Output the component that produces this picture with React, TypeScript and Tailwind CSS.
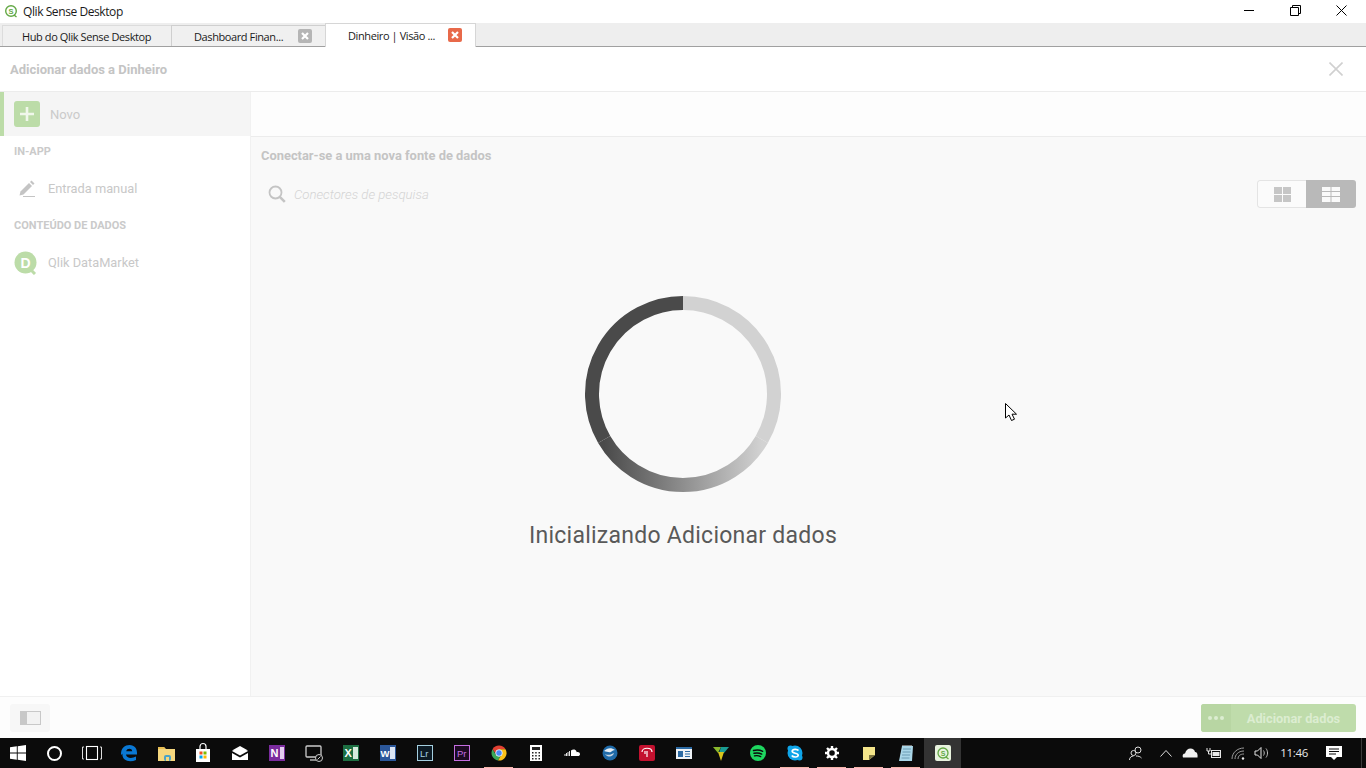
import type { ReactNode } from 'react';

const plex = "font-['Roboto',sans-serif]";

const Ico = ({ children, className = '' }: { children: ReactNode; className?: string }) => (
  <svg viewBox="0 0 24 24" width="24" height="24" className={className}>
    {children}
  </svg>
);

const TabClose = ({ color }: { color: string }) => (
  <span className={`w-[14px] h-[14px] rounded-[2px] flex items-center justify-center ${color}`}>
    <svg viewBox="0 0 10 10" width="10" height="10">
      <path d="M2 2 8 8M8 2 2 8" stroke="#fff" strokeWidth="2.2" />
    </svg>
  </span>
);

const taskIcons: { key: string; node: ReactNode; mark?: boolean }[] = [
  {
    key: 'cortana',
    node: <span className="block w-[15px] h-[15px] -ml-[1px] rounded-full border-[2px] border-white" />,
  },
  {
    key: 'taskview',
    node: (
      <Ico>
        <path d="M4 6H2.500v12H4M20 6h1.500v12H20" fill="none" stroke="#ddd" strokeWidth="1" />
        <rect x="6.500" y="5.500" width="11" height="13" fill="none" stroke="#fff" strokeWidth="1.100" />
      </Ico>
    ),
  },
  {
    key: 'edge',
    node: (
      <Ico>
        <path
          d="M4 13C4 7 8 4 12.500 4c5 0 8 3.500 7.500 9.500H9c.3 3.500 5.500 4.500 10 2v3.500c-6.500 3-14.500.5-13.500-6.500C4.800 14 4.300 14 4 13Zm5.200-2.800h6c0-3.300-5.500-3.300-6 0Z"
          fill="#0a78d4"
        />
      </Ico>
    ),
  },
  {
    key: 'explorer',
    node: (
      <Ico>
        <path d="M4 6h6l2 2h9v12H4Z" fill="#f5d77e" />
        <path d="M4 6h6l1 2H4Z" fill="#e8bd50" />
        <rect x="10" y="14" width="7" height="6" rx="2" fill="#4ba3c7" />
        <rect x="12" y="16" width="3" height="4" fill="#f5d77e" />
      </Ico>
    ),
  },
  {
    key: 'store',
    node: (
      <Ico>
        <path d="M5 8h14v13H5Z" fill="#fff" />
        <path d="M9 8V5.500a3 3 0 0 1 6 0V8" fill="none" stroke="#fff" strokeWidth="1.200" />
        <rect x="8.500" y="10.500" width="3" height="3" fill="#f25022" />
        <rect x="12.500" y="10.500" width="3" height="3" fill="#7fba00" />
        <rect x="8.500" y="14.500" width="3" height="3" fill="#00a4ef" />
        <rect x="12.500" y="14.500" width="3" height="3" fill="#ffb900" />
      </Ico>
    ),
  },
  {
    key: 'mail',
    node: (
      <Ico>
        <path d="M4 10h16l-8 4.500Z" fill="#fff" />
        <path d="M4 12v7h16v-7l-8 4.500Z" fill="#fff" />
        <path d="M4 9.500 12 5l8 4.500-8 2Z" fill="#fff" />
      </Ico>
    ),
  },
  {
    key: 'onenote',
    node: (
      <Ico>
        <rect x="4" y="4" width="16" height="16" fill="#7b2c9e" />
        <rect x="15" y="6" width="4" height="12" fill="#e4cdf0" />
        <text x="5.500" y="16" fill="#fff" fontSize="11" fontWeight="700" fontFamily="Liberation Sans, sans-serif">
          N
        </text>
      </Ico>
    ),
  },
  {
    key: 'remote',
    node: (
      <Ico>
        <rect x="4" y="5" width="15" height="11" rx="1" fill="none" stroke="#ccc" strokeWidth="1.300" />
        <path d="M8 19h6" stroke="#ccc" strokeWidth="1.300" />
        <circle cx="17" cy="17" r="3.500" fill="#0b0b0b" stroke="#ccc" strokeWidth="1" />
        <path d="m15.500 18.500 3-3" stroke="#ccc" />
      </Ico>
    ),
  },
  {
    key: 'excel',
    node: (
      <Ico>
        <rect x="4" y="4" width="16" height="16" fill="#1d6f42" />
        <rect x="14" y="6" width="5" height="12" fill="#d6ebdd" />
        <text x="5.500" y="16" fill="#fff" fontSize="11" fontWeight="700" fontFamily="Liberation Sans, sans-serif">
          X
        </text>
      </Ico>
    ),
  },
  {
    key: 'word',
    node: (
      <Ico>
        <rect x="4" y="4" width="16" height="16" fill="#2b579a" />
        <rect x="14" y="6" width="5" height="12" fill="#dbe5f4" />
        <text x="4.500" y="15.500" fill="#fff" fontSize="9.500" fontWeight="700" fontFamily="Liberation Sans, sans-serif">
          W
        </text>
      </Ico>
    ),
  },
  {
    key: 'lightroom',
    node: (
      <Ico>
        <rect x="4.500" y="4.500" width="15" height="15" fill="#0c1a24" stroke="#a4cfe0" />
        <text x="7" y="15.500" fill="#a4cfe0" fontSize="9.500" fontFamily="Liberation Sans, sans-serif">
          Lr
        </text>
      </Ico>
    ),
  },
  {
    key: 'premiere',
    node: (
      <Ico>
        <rect x="4.500" y="4.500" width="15" height="15" fill="#1c0a22" stroke="#c46de0" />
        <text x="7" y="15.500" fill="#c46de0" fontSize="9.500" fontFamily="Liberation Sans, sans-serif">
          Pr
        </text>
      </Ico>
    ),
  },
  {
    key: 'chrome',
    mark: true,
    node: (
      <Ico>
        <path d="M12 4.500a7.500 7.500 0 0 1 6.500 3.750H12Z" fill="#e34133" />
        <path d="M5.500 8.250A7.500 7.500 0 0 1 12 4.500v3.750l-3 5Z" fill="#e34133" />
        <path d="M5.500 8.250a7.500 7.500 0 0 0 5.500 11.200l3-5.500-5 0Z" fill="#3aa757" />
        <path d="M18.500 8.250a7.500 7.500 0 0 1-7.500 11.200l3.500-6L12 8.250Z" fill="#fbc118" />
        <circle cx="12" cy="12" r="3.300" fill="#4a8af4" stroke="#fff" strokeWidth=".8" />
      </Ico>
    ),
  },
  {
    key: 'calc',
    node: (
      <Ico>
        <rect x="6" y="4" width="12" height="16" fill="#fff" />
        <rect x="8" y="6" width="8" height="3" fill="#222" />
        <path
          d="M8 11h1.500v1.500H8Zm3.200 0h1.500v1.500h-1.500Zm3.300 0H16v1.500h-1.500ZM8 14h1.500v1.500H8Zm3.200 0h1.500v1.500h-1.500Zm3.300 0H16v1.500h-1.500ZM8 17h1.500v1.500H8Zm3.200 0h1.500v1.500h-1.500Zm3.300 0H16v1.500h-1.500Z"
          fill="#222"
        />
      </Ico>
    ),
  },
  {
    key: 'soundcloud',
    node: (
      <Ico>
        <path d="M10 15V9.500c1-1 2.500-1.300 3.500-1 1.200.4 2 1.500 2.200 2.700 1.800-.5 3.300.6 3.300 2 0 1.100-.9 1.800-2 1.800Z" fill="#fff" />
        <path d="M8.500 15v-5M7 15v-4M5.500 15v-3M4 15v-2" stroke="#fff" strokeWidth=".9" />
      </Ico>
    ),
  },
  {
    key: 'thunderbird',
    node: (
      <Ico>
        <circle cx="12" cy="12" r="7.500" fill="#1f6aa8" />
        <path d="M6 10c3-3 7-4 11-1-2 0-3 1-4 2-2 .5-4 0-7-1Z" fill="#e7eef5" />
        <path d="M7 13c3 1.500 5 1 9-1-1 4-6 5-9 1Z" fill="#c9d6e2" />
      </Ico>
    ),
  },
  {
    key: 'pin',
    node: (
      <Ico>
        <rect x="4" y="4" width="16" height="16" rx="2" fill="#c3112f" />
        <path d="M7 11c0-5 10-5 10 0M12 10v6M10 10v3" fill="none" stroke="#fff" strokeWidth="1.200" />
      </Ico>
    ),
  },
  {
    key: 'news',
    node: (
      <Ico>
        <rect x="4" y="6" width="16" height="12" fill="#eef2f6" />
        <rect x="4" y="6" width="16" height="2" fill="#2c6aa3" />
        <rect x="6" y="10" width="5" height="6" fill="#2c6aa3" />
        <path d="M13 10.500h5M13 13h5M13 15.500h5" stroke="#2c6aa3" />
      </Ico>
    ),
  },
  {
    key: 'vectornator',
    node: (
      <Ico>
        <path d="M4 6h8l-3 6Z" fill="#8ab92d" />
        <path d="M12 6h8l-5 6h-5Z" fill="#1a9d94" />
        <path d="M9 11h6l-3 9Z" fill="#d9c51e" />
      </Ico>
    ),
  },
  {
    key: 'spotify',
    node: (
      <Ico>
        <circle cx="12" cy="12" r="8" fill="#1ed760" />
        <path
          d="M7.500 9.500c3-.8 6.500-.6 9.200.8M8 12.300c2.500-.6 5.500-.4 7.700.8M8.500 14.900c2-.5 4.300-.3 6.200.7"
          fill="none"
          stroke="#0b0b0b"
          strokeWidth="1.400"
          strokeLinecap="round"
        />
      </Ico>
    ),
  },
  {
    key: 'skype',
    mark: true,
    node: (
      <Ico>
        <circle cx="12" cy="12" r="7.500" fill="#0fa5e9" />
        <circle cx="7.500" cy="7.500" r="3" fill="#0fa5e9" />
        <circle cx="16.500" cy="16.500" r="3" fill="#0fa5e9" />
        <path
          d="M15.500 9.500c-1-1.500-6-1.800-6.300.6-.3 2.600 6.200 1.600 6 4.200-.2 2.200-5 2.200-6.400.2"
          fill="none"
          stroke="#fff"
          strokeWidth="1.700"
        />
      </Ico>
    ),
  },
  {
    key: 'settings',
    mark: true,
    node: (
      <Ico>
        <circle cx="12" cy="12" r="4" fill="none" stroke="#fff" strokeWidth="2.400" />
        <path
          d="M12 5v3M12 16v3M5 12h3M16 12h3M7 7l2 2M15 15l2 2M17 7l-2 2M9 15l-2 2"
          stroke="#fff"
          strokeWidth="2.400"
        />
      </Ico>
    ),
  },
  {
    key: 'sticky',
    mark: true,
    node: (
      <Ico>
        <path d="M6 6h12v8l-6 5H6Z" fill="#f4e58a" />
        <path d="M18 14h-6v5Z" fill="#7c7440" />
      </Ico>
    ),
  },
  {
    key: 'notepad',
    mark: true,
    node: (
      <Ico>
        <path d="M8 5h11l-1 15H5Z" fill="#a9d6e8" />
        <path d="M9 5v-1M11 5v-1M13 5v-1M15 5v-1M17 5v-1" stroke="#ddd" />
        <path d="M9 8h8M8.500 11h8M8 14h8M7.500 17h8" stroke="#5c8ea6" strokeWidth=".8" />
      </Ico>
    ),
  },
];

export default function App() {
  return (
    <div className={`relative w-[1366px] h-[768px] overflow-hidden flex flex-col bg-white ${plex}`}>
      {/* window title */}
      <div className="h-[23px] shrink-0 flex items-center pl-[4px] bg-white">
        <svg viewBox="0 0 14 14" width="14" height="14" className="-mt-[1px]">
          <circle cx="7" cy="7" r="5.300" fill="#fff" stroke="#62a844" strokeWidth="1.400" />
          <path d="m10 11 2.500 2" stroke="#62a844" strokeWidth="1.400" />
          <text x="4.600" y="9.700" fontSize="7.500" fontWeight="700" fill="#62a844" fontFamily="Liberation Sans, sans-serif">
            S
          </text>
        </svg>
        <span className="ml-[5px] text-[12px] text-[#1a1a1a] font-['Open_Sans',sans-serif] tracking-[-0.42px]">
          Qlik Sense Desktop
        </span>
        <div className="ml-auto -mt-[2px] flex items-center">
          <span className="w-[46px] h-[23px] flex items-center justify-center">
            <span className="w-[10px] h-px bg-black" />
          </span>
          <span className="w-[46px] h-[23px] flex items-center justify-center">
            <svg viewBox="0 0 11 11" width="11" height="11">
              <path d="M.5 2.500h8v8h-8ZM2.500 2.500v-2h8v8h-2" fill="none" stroke="#000" />
            </svg>
          </span>
          <span className="w-[46px] h-[23px] flex items-center justify-center mr-[2px]">
            <svg viewBox="0 0 11 11" width="11" height="11">
              <path d="m.5.5 10 10M10.500.5l-10 10" stroke="#000" />
            </svg>
          </span>
        </div>
      </div>

      {/* tabs */}
      <div className="h-[24px] shrink-0 flex items-end pl-[2px] bg-[#eeeeee] border-b border-[#a0a0a0] font-['Open_Sans',sans-serif] text-[11px] text-[#1a1a1a] tracking-[-0.4px]">
        <div className="w-[169px] h-[21px] flex items-center pl-[19px] bg-[#f0f0f0] border-l border-t border-[#dcdcdc]">
          <span className="mt-[2px]">Hub do Qlik Sense Desktop</span>
        </div>
        <div className="w-[154px] h-[21px] flex items-center pl-[22px] bg-[#f0f0f0] border-l border-t border-[#cfcfcf]">
          <span className="mt-[2px]">Dashboard Finan...</span>
          <span className="ml-auto mr-[13px]">
            <TabClose color="bg-[#b5b5b5]" />
          </span>
        </div>
        <div className="w-[151px] h-[24px] -mb-px flex items-center pl-[22px] bg-white border-x border-t border-[#d6d6d6]">
          <span className="mt-[2px]">Dinheiro | Visão ...</span>
          <span className="ml-auto mr-[13px] -mt-[2px]">
            <TabClose color="bg-[#e8694a]" />
          </span>
        </div>
      </div>

      {/* dialog head */}
      <div className="h-[45px] shrink-0 flex items-center pl-[10px] pr-[23px] border-b border-[#ececec]">
        <span className="mt-[2px] text-[13px] font-bold text-[#c4c4c4]">Adicionar dados a Dinheiro</span>
        <svg viewBox="0 0 14 14" width="14" height="14" className="ml-auto">
          <path d="m.5.5 13 13M13.500.5l-13 13" stroke="#d0d0d0" strokeWidth="1.600" />
        </svg>
      </div>

      {/* body */}
      <div className="flex-1 flex min-h-0">
        <aside className="w-[250px] shrink-0 bg-white">
          <div className="h-[44px] flex items-center bg-[#f5f5f5] border-l-[4px] border-[#bcdca8] pl-[10px]">
            <span className="w-[26px] h-[26px] rounded-[3px] bg-[#bcdca8] flex items-center justify-center">
              <svg viewBox="0 0 16 16" width="16" height="16">
                <path d="M8 1v14M1 8h14" stroke="#f0f7eb" strokeWidth="2.600" />
              </svg>
            </span>
            <span className="ml-[10px] mt-[2px] text-[13px] text-[#cacaca]">Novo</span>
          </div>
          <div className="pl-[14px] mt-[10px] text-[11px] leading-[12px] font-bold text-[#cacaca]">IN-APP</div>
          <div className="h-[26px] mt-[18px] flex items-center pl-[18px] text-[12.800px] text-[#c8c8c8]">
            <svg viewBox="0 0 18 18" width="18" height="18">
              <path d="M2.500 11.500 11 3l3 3-8.500 8.500-4 1Z" fill="#c4c4c4" />
              <path d="M12 2l1.500-1.500 3 3L15 5Z" fill="#c4c4c4" />
              <path d="M5 16.500h12" stroke="#c4c4c4" />
            </svg>
            <span className="ml-[12px]">Entrada manual</span>
          </div>
          <div className="pl-[14px] mt-[18px] text-[11px] leading-[12px] font-bold text-[#cacaca]">CONTEÚDO DE DADOS</div>
          <div className="h-[26px] mt-[18px] flex items-center pl-[14px] text-[12.800px] text-[#c8c8c8]">
            <svg viewBox="0 0 24 24" width="24" height="24">
              <circle cx="11.500" cy="11.500" r="11" fill="#bcdca8" />
              <path d="m17 19 4 4" stroke="#bcdca8" strokeWidth="3" />
              <text x="6.500" y="17" fontSize="14" fontWeight="700" fill="#fff" fontFamily="Liberation Sans, sans-serif">
                D
              </text>
            </svg>
            <span className="ml-[10px]">Qlik DataMarket</span>
          </div>
        </aside>

        <main className="flex-1 min-w-0 bg-[#f9f9f9] border-l border-[#f1f1f1]">
          <div className="h-[45px] bg-[#fdfdfd] border-b border-[#ececec]" />
          <div className="pl-[10px] mt-[12px] text-[12.900px] leading-[14px] font-bold text-[#c4c4c4]">
            Conectar-se a uma nova fonte de dados
          </div>
          <div className="flex items-center mt-[17px] pl-[17px] pr-[10px] h-[28px]">
            <svg viewBox="0 0 18 18" width="18" height="18">
              <circle cx="7.500" cy="7.500" r="6" fill="none" stroke="#c4c4c4" strokeWidth="1.800" />
              <path d="m11.800 11.800 5 5" stroke="#c4c4c4" strokeWidth="2.600" />
            </svg>
            <span className="ml-[8px] mt-[2px] text-[13.200px] italic font-light text-[#d4d4d4]">Conectores de pesquisa</span>
            <div className="ml-auto flex h-[28px] w-[99px] rounded-[3px] overflow-hidden">
              <span className="w-[49px] flex items-center justify-center bg-[#fbfbfb] border border-r-0 border-[#e4e4e4] rounded-l-[3px]">
                <svg viewBox="0 0 17 15" width="17" height="15">
                  <path d="M0 0h8v7H0ZM9 0h8v7H9ZM0 8h8v7H0ZM9 8h8v7H9Z" fill="#c6c6c6" />
                </svg>
              </span>
              <span className="flex-1 flex items-center justify-center bg-[#b9b9b9]">
                <svg viewBox="0 0 18 15" width="18" height="15">
                  <path
                    d="M0 0h8.500v4H0ZM9.500 0H18v4H9.500ZM0 5h8.500v4H0ZM9.500 5H18v4H9.500ZM0 10h8.500v5H0ZM9.500 10H18v5H9.500Z"
                    fill="#fafafa"
                  />
                </svg>
              </span>
            </div>
          </div>
        </main>
      </div>

      {/* dialog footer */}
      <div className="h-[42px] shrink-0 flex items-center justify-between pl-[10px] pr-[10px] bg-[#fdfdfd] border-t border-[#f0f0f0]">
        <span className="w-[40px] h-[28px] rounded-[3px] bg-[#f7f7f7] flex items-center justify-center">
          <span className="w-[21px] h-[14px] flex bg-[#f2f2f2] border border-[#c8c8c8] border-l-[7px]" />
        </span>
        <div className="w-[155px] h-[28px] rounded-[3px] overflow-hidden flex bg-[#bfdcab] text-[12.800px] font-bold text-[#dcedd1]">
          <span className="w-[30px] bg-[#b8d6a3] flex items-center justify-center gap-[2px]">
            <span className="w-[4px] h-[4px] rounded-full bg-[#dcedd1]" />
            <span className="w-[4px] h-[4px] rounded-full bg-[#dcedd1]" />
            <span className="w-[4px] h-[4px] rounded-full bg-[#dcedd1]" />
          </span>
          <span className="flex-1 flex items-center justify-center pt-[2px]">Adicionar dados</span>
        </div>
      </div>

      {/* taskbar */}
      <div className="h-[30px] shrink-0 flex items-center bg-[#0b0b0b] text-white">
        <span className="w-[36px] h-[30px] flex items-center justify-center">
          <svg viewBox="0 0 16 16" width="16" height="16">
            <path d="M0 2.300 6.800 1.300v6.300H0ZM7.700 1.200 16 0v7.600H7.700ZM0 8.400h6.800v6.300L0 13.700ZM7.700 8.400H16V16L7.700 14.800Z" fill="#fff" />
          </svg>
        </span>
        {taskIcons.map((icon) => (
          <span key={icon.key} className="relative w-[37px] h-[30px] flex items-center justify-center">
            {icon.node}
            {icon.mark && <span className="absolute bottom-0 left-[4px] right-[4px] h-px bg-[#f5b5aa]" />}
          </span>
        ))}
        <span className="w-[37px] h-[30px] flex items-center justify-center bg-[#333333]">
          <span className="w-[16px] h-[16px] rounded-[2px] bg-[#e8f3df] flex items-center justify-center">
            <svg viewBox="0 0 14 14" width="14" height="14">
              <circle cx="7" cy="7" r="5" fill="none" stroke="#62a844" strokeWidth="1.300" />
              <path d="m10 11 2.500 2" stroke="#62a844" strokeWidth="1.300" />
              <text x="4.700" y="9.500" fontSize="7" fontWeight="700" fill="#62a844" fontFamily="Liberation Sans, sans-serif">
                S
              </text>
            </svg>
          </span>
        </span>

        <div className="ml-auto flex items-center">
          <svg viewBox="0 0 16 16" width="16" height="16" className="mr-[16px]">
            <circle cx="10" cy="5" r="3" fill="none" stroke="#ddd" />
            <circle cx="5.500" cy="8" r="2.500" fill="none" stroke="#ddd" />
            <path d="M1.500 15c0-2.500 1.800-4 4-4M8 11c2.500 0 4 .5 5.500 2" fill="none" stroke="#ddd" />
          </svg>
          <svg viewBox="0 0 12 7" width="12" height="7" className="mr-[10px]">
            <path d="m.5 6.500 5.500-6 5.500 6" fill="none" stroke="#ddd" />
          </svg>
          <svg viewBox="0 0 16 10" width="16" height="10" className="mr-[8px]">
            <path d="M1 9.500c-1-2 0-4 2-4C4 2 6 .5 8.500.5c2.500 0 4 1.500 4.500 3.500 2 0 3 2 2.500 5.500Z" fill="#f0f0f0" />
          </svg>
          <svg viewBox="0 0 16 12" width="16" height="12" className="mr-[9px]">
            <rect x="5.500" y="3.500" width="9" height="7" fill="#0b0b0b" stroke="#e6e6e6" />
            <rect x="6.500" y="5" width="7" height="4" fill="#e6e6e6" />
            <path d="M1 1v3h3V1M2.500 4v3h3" fill="none" stroke="#e6e6e6" />
          </svg>
          <svg viewBox="0 0 14 14" width="14" height="14" className="mr-[9px]">
            <path d="M1 13C1 7 6 2 13 2M4 13c0-4 3-8 9-8M7 13c0-3 2-5 6-5" fill="none" stroke="#9a9a9a" />
            <circle cx="12" cy="12.500" r="1.200" fill="#eee" />
          </svg>
          <svg viewBox="0 0 16 14" width="16" height="14" className="mr-[10px]">
            <path d="M1 5h2.500L7 1.500v11L3.500 9H1Z" fill="none" stroke="#e6e6e6" />
            <path d="M9.500 4.500c1 1.500 1 3.500 0 5M12 2.500c2 2.500 2 6.500 0 9" fill="none" stroke="#bdbdbd" />
          </svg>
          <span className="text-[11.500px] font-['Open_Sans',sans-serif] text-[#e8e8e8] tracking-[-0.3px] mr-[18px]">11:46</span>
          <svg viewBox="0 0 16 16" width="16" height="16" className="mr-[19px]">
            <path d="M0 1h16v11h-5l-3 3-3-3H0Z" fill="#fff" />
            <path d="M3 4h10M3 6.500h10M3 9h7" stroke="#0b0b0b" />
          </svg>
          <span className="w-px h-[30px] bg-[#3a3a3a] mr-[4px]" />
        </div>
      </div>

      {/* loading overlay */}
      <div className="absolute left-0 right-0 top-[296px] flex flex-col items-center pointer-events-none">
        <svg viewBox="0 0 196 196" width="196" height="196">
          <defs>
            <linearGradient id="spin" gradientUnits="userSpaceOnUse" x1="177" y1="143" x2="19" y2="143">
              <stop offset="0" stopColor="#d2d2d2" />
              <stop offset="1" stopColor="#4a4a4a" />
            </linearGradient>
          </defs>
          <path d="M98 7A91 91 0 0 1 176.800 143.500" fill="none" stroke="#d2d2d2" strokeWidth="14" />
          <path d="M176.800 143.500A91 91 0 0 1 19.200 143.500" fill="none" stroke="url(#spin)" strokeWidth="14" />
          <path d="M19.200 143.500A91 91 0 0 1 98 7" fill="none" stroke="#4a4a4a" strokeWidth="14" />
        </svg>
        <div className="mt-[29px] text-[23px] leading-[30px] text-[#595959] tracking-[0.25px]">Inicializando Adicionar dados</div>
      </div>

      {/* mouse pointer */}
      <svg viewBox="0 0 13 19" width="13" height="19" className="absolute left-[1005px] top-[403px]">
        <path d="M.5.500v14.500l3.500-3 2.500 5.500 3-1.300-2.500-5h4.500Z" fill="#fff" stroke="#000" strokeWidth="1" />
      </svg>
    </div>
  );
}
